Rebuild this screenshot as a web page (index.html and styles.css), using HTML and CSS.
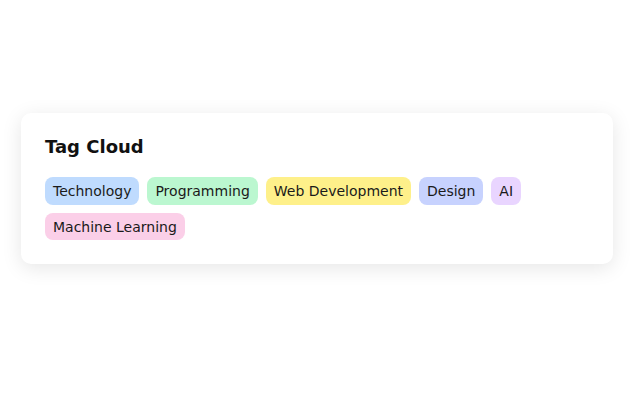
FILE: index.html
```html
<!DOCTYPE html>
<html>
<head>
<meta charset="utf-8">
<link rel="stylesheet" href="styles.css">
</head>
<body>
<div class="card">
  <h2 class="title">Tag Cloud</h2>
  <div class="tags">
    <span class="tag blue">Technology</span>
    <span class="tag green">Programming</span>
    <span class="tag yellow">Web Development</span>
    <span class="tag indigo">Design</span>
    <span class="tag purple">AI</span>
    <span class="tag pink">Machine Learning</span>
  </div>
</div>
</body>
</html>
```
FILE: styles.css
```css
html, body {
  margin: 0;
  background: #ffffff;
  font-family: "DejaVu Sans", sans-serif;
}
body {
  padding: 113px 22px 0 21px;
  min-height: 407px;
  box-sizing: border-box;
}
.card {
  padding: 23px 24px 24px;
  background: #ffffff;
  border-radius: 10px;
  box-shadow: 0 4px 20px rgba(0, 0, 0, 0.1);
}
.title {
  margin: 0 0 20px;
  font-size: 18px;
  font-weight: bold;
  line-height: 21px;
  color: #111111;
}
.tags {
  display: flex;
  flex-wrap: wrap;
  gap: 8px;
}
.tag {
  padding: 5px 8px 3px;
  border-radius: 8px;
  font-size: 14px;
  line-height: 19.6px;
  color: #1a1a1a;
}
.blue { background: #bfdbfe; }
.green { background: #bbf7d0; }
.yellow { background: #fef08a; }
.indigo { background: #c7d2fe; }
.purple { background: #e9d5ff; }
.pink { background: #fbcfe8; }
```
